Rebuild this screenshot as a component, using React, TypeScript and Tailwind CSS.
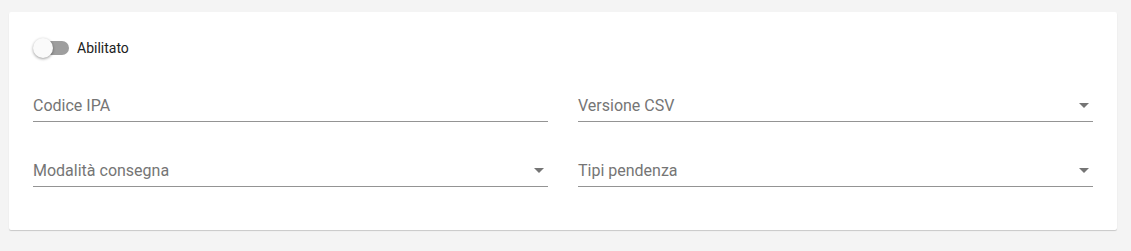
import React from "react";

const font = { fontFamily: "Roboto, 'Liberation Sans', sans-serif" };

function Field({ label, select }: { label: string; select?: boolean }) {
  return (
    <div className="flex items-center justify-between border-b border-[#949494] pt-[2px] pb-[3px]">
      <span className="text-[16px] leading-6 text-[#757575]">{label}</span>
      {select && (
        <svg width="10" height="5" viewBox="0 0 10 5" className="mr-[4px] mt-[-1px]">
          <path d="M0 0 L10 0 L5 5 Z" fill="#757575" />
        </svg>
      )}
    </div>
  );
}

export default function App() {
  return (
    <div className="h-[251px] w-[1131px] bg-[#f4f4f4] pt-[12px]" style={font}>
      <div className="ml-[9px] w-[1108px] rounded-[2px] bg-white px-[24px] pt-[26px] pb-[43px] shadow-[0_1px_1px_rgba(0,0,0,0.18)]">
        {/* Toggle */}
        <div className="flex h-[20px] items-center gap-[8px]">
          <div className="relative h-[20px] w-[36px]">
            <div className="absolute left-[2px] top-[3px] h-[14px] w-[34px] rounded-full bg-[#9e9e9e]" />
            <div className="absolute left-0 top-0 h-[20px] w-[20px] rounded-full bg-[#fafafa] shadow-[0_1px_3px_rgba(0,0,0,0.4)]" />
          </div>
          <span className="text-[14px] text-[#212121]">Abilitato</span>
        </div>

        <div className="mt-[34px] grid grid-cols-2 gap-x-[30px] gap-y-[35px]">
          <Field label="Codice IPA" />
          <Field label="Versione CSV" select />
          <Field label="Modalità consegna" select />
          <Field label="Tipi pendenza" select />
        </div>
      </div>
    </div>
  );
}
